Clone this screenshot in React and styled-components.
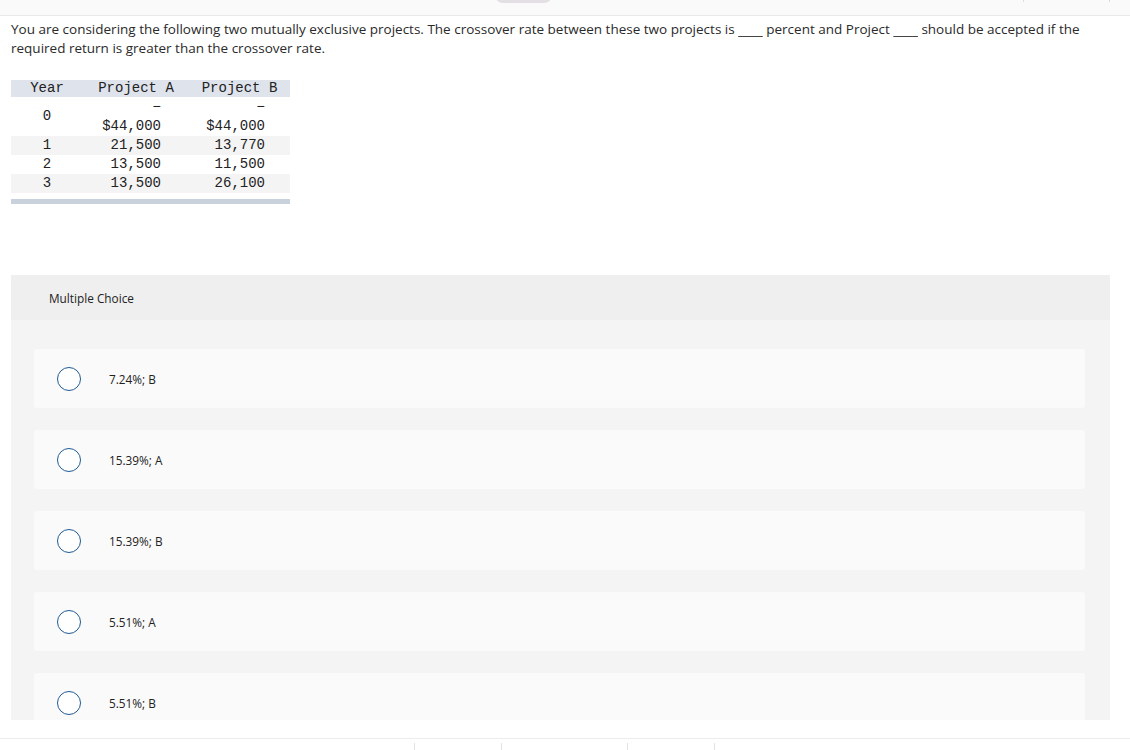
import React from 'react'
import styled, { createGlobalStyle } from 'styled-components'

const GlobalStyle = createGlobalStyle`
    html, body {
        margin: 0;
        padding: 0;
        background: #fff;
    }
    body {
        font-family: "Open Sans", Lato, sans-serif;
        color: #2b2b2b;
    }
`

const rows = [
    { year: 0, a: '$44,000', b: '$44,000', neg: true },
    { year: 1, a: '21,500', b: '13,770' },
    { year: 2, a: '13,500', b: '11,500' },
    { year: 3, a: '13,500', b: '26,100' },
]

const choices = ['7.24%; B', '15.39%; A', '15.39%; B', '5.51%; A', '5.51%; B']

const gap = '\u00a0'.repeat(7)

function App() {
    return (
        <Page>
            <GlobalStyle />
            <TopBar>
                <Pill />
                <Tick style={{ left: 1023 }} />
                <Tick style={{ left: 1109 }} />
            </TopBar>

            <Main>
                <Question>
                    You are considering the following two mutually exclusive projects. The crossover rate between these two projects is <Blank>{gap}</Blank> percent and Project <Blank>{gap}</Blank> should be accepted if the required return is greater than the crossover rate.
                </Question>

                <TableWrap>
                    <CashTable>
                        <thead>
                            <tr>
                                <Th>Year</Th>
                                <Th>Project A</Th>
                                <Th>Project B</Th>
                            </tr>
                        </thead>
                        <tbody>
                            {rows.map((r, i) => (
                                <Tr key={r.year} $shade={i % 2 === 1}>
                                    <YearCell>{r.year}</YearCell>
                                    <Cell $pad={28}>
                                        {r.neg && <Dash>−</Dash>}
                                        {r.a}
                                    </Cell>
                                    <Cell $pad={25}>
                                        {r.neg && <Dash>−</Dash>}
                                        {r.b}
                                    </Cell>
                                </Tr>
                            ))}
                        </tbody>
                    </CashTable>
                    <TableFoot />
                </TableWrap>

                <Choices>
                    <ChoicesHead>Multiple Choice</ChoicesHead>
                    <ChoicesBody>
                        {choices.map((c) => (
                            <Option key={c}>
                                <Radio />
                                <OptionLabel>{c}</OptionLabel>
                            </Option>
                        ))}
                    </ChoicesBody>
                </Choices>
            </Main>

            <Footer>
                <FootTick style={{ left: 414 }} />
                <FootTick style={{ left: 501 }} />
                <FootTick style={{ left: 627 }} />
                <FootTick style={{ left: 714 }} />
            </Footer>
        </Page>
    )
}

export default App

const Page = styled.div`
    width: 1130px;
    height: 750px;
    overflow: hidden;
    background: #fff;
`

const TopBar = styled.div`
    position: relative;
    height: 15px;
    background: #fafafa;
    border-bottom: 1px solid #e9e9e9;
`

const Pill = styled.div`
    position: absolute;
    left: 495px;
    top: -6px;
    width: 57px;
    height: 9px;
    border-radius: 0 0 8px 8px;
    background: #e4dfe4;
`

const Tick = styled.div`
    position: absolute;
    top: 0;
    width: 1px;
    height: 2px;
    background: #dcdcdc;
`

const Main = styled.div`
    height: 704px;
    overflow: hidden;
    padding: 0 20px 0 11px;
`

const Question = styled.p`
    margin: 0;
    padding-top: 4px;
    font-size: 13.5px;
    line-height: 19px;
    color: #2a2a2a;
`

const Blank = styled.span`
    text-decoration: underline;
    text-decoration-color: #444;
    text-underline-offset: 2px;
`

const TableWrap = styled.div`
    width: 279px;
    margin-top: 22px;
`

const CashTable = styled.table`
    width: 279px;
    border-collapse: collapse;
    table-layout: fixed;
    font-family: "Liberation Mono", "Courier New", monospace;
    font-size: 14px;
    color: #222;
`

const Th = styled.th`
    background: #dfe3ec;
    font-weight: normal;
    height: 17px;
    padding: 0;
    line-height: 17px;
    text-align: center;

    &:nth-child(1) { width: 72px; }
    &:nth-child(2) { width: 106px; }
`

const Tr = styled.tr`
    background: ${(p) => (p.$shade ? '#f4f4f4' : '#fff')};
`

const YearCell = styled.td`
    text-align: center;
    padding: 0;
    line-height: 19px;
    vertical-align: middle;
`

const Cell = styled.td`
    text-align: right;
    padding: 0 ${(p) => p.$pad}px 0 0;
    line-height: 19px;
`

const Dash = styled.div`
    line-height: 20px;
`

const TableFoot = styled.div`
    height: 5px;
    margin-top: 6px;
    background: #c9d1dd;
`

const Choices = styled.div`
    margin-top: 71px;
    background: #f4f4f4;
`

const ChoicesHead = styled.div`
    height: 45px;
    display: flex;
    align-items: center;
    padding-left: 38px;
    background: #efefef;
    font-size: 11.8px;
    color: #222;
`

const ChoicesBody = styled.div`
    display: flex;
    flex-direction: column;
    gap: 22px;
    padding: 29px 25px 29px 23px;
`

const Option = styled.div`
    height: 59px;
    display: flex;
    align-items: center;
    padding-left: 23px;
    background: #fafafa;
    border-radius: 3px;
`

const Radio = styled.span`
    width: 22px;
    height: 22px;
    border: 1.5px solid #1f5a94;
    border-radius: 50%;
    background: #fff;
    flex-shrink: 0;
`

const OptionLabel = styled.span`
    margin-left: 28px;
    font-size: 11.8px;
    color: #222;
`

const Footer = styled.div`
    position: relative;
    margin-top: 18px;
    border-top: 1px solid #ececec;
    height: 12px;
`

const FootTick = styled.div`
    position: absolute;
    top: 4px;
    width: 1px;
    height: 8px;
    background: #e2e2e2;
`
